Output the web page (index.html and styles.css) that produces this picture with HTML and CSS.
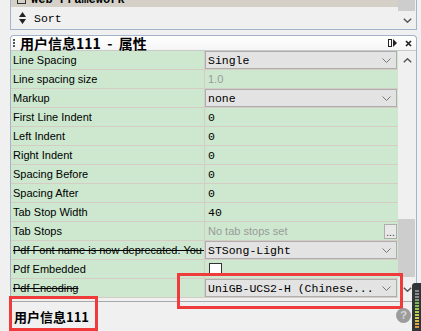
FILE: index.html
```html
<!DOCTYPE html>
<html lang="en">
<head>
    <meta charset="UTF-8">
    <meta name="viewport" content="width=device-width, initial-scale=1.0">
    <title>用户信息111 - 属性</title>
    <link rel="stylesheet" href="styles.css">
</head>
<body>
    <div class="top-panel">
        <div class="list">
            <div class="group-row"><span class="group-box"></span>Web Framework</div>
            <div class="sort-row">
                <svg class="sort-icon" width="7" height="12" viewBox="0 0 7 12"><path d="M3.5 0 L7 5 L0 5 Z M0 7 L7 7 L3.5 12 Z" fill="#222"/></svg>
                <span>Sort</span>
            </div>
        </div>
        <div class="vscroll top">
            <div class="sb-thumb small"></div>
            <div class="sb-btn"><svg width="9" height="5" viewBox="0 0 9 5"><polyline points="0.8,0.8 4.5,4.2 8.2,0.8" fill="none" stroke="#555" stroke-width="1.5"/></svg></div>
        </div>
    </div>

    <div class="prop-panel">
        <div class="panel-header">
            <svg class="grip" width="2" height="8" viewBox="0 0 2 8"><rect x="0" y="0" width="2" height="2" fill="#555"/><rect x="0" y="3" width="2" height="2" fill="#555"/><rect x="0" y="6" width="2" height="2" fill="#555"/></svg>
            <span class="panel-title">用户信息111 &nbsp;- &nbsp;属性</span>
            <span class="spacer"></span>
            <svg class="pin" width="9" height="8" viewBox="0 0 9 8"><rect x="0.5" y="0.5" width="3" height="7" fill="none" stroke="#222"/><path d="M5 0 L9 4 L5 8 Z" fill="#222"/></svg>
            <svg class="close" width="7" height="7" viewBox="0 0 7 7"><path d="M1 1 L6 6 M6 1 L1 6" stroke="#222" stroke-width="1.7"/></svg>
        </div>

        <div class="grid-area">
            <div class="rows">
                <div class="row"><div class="label">Line Spacing</div><div class="value"><div class="combo">Single<svg width="9" height="5" viewBox="0 0 9 5"><polyline points="0.5,0.5 4.5,4.5 8.5,0.5" fill="none" stroke="#777"/></svg></div></div></div>
                <div class="row"><div class="label">Line spacing size</div><div class="value muted">1.0</div></div>
                <div class="row"><div class="label">Markup</div><div class="value"><div class="combo">none<svg width="9" height="5" viewBox="0 0 9 5"><polyline points="0.5,0.5 4.5,4.5 8.5,0.5" fill="none" stroke="#777"/></svg></div></div></div>
                <div class="row"><div class="label">First Line Indent</div><div class="value num">0</div></div>
                <div class="row"><div class="label">Left Indent</div><div class="value num">0</div></div>
                <div class="row"><div class="label">Right Indent</div><div class="value num">0</div></div>
                <div class="row"><div class="label">Spacing Before</div><div class="value num">0</div></div>
                <div class="row"><div class="label">Spacing After</div><div class="value num">0</div></div>
                <div class="row"><div class="label">Tab Stop Width</div><div class="value num">40</div></div>
                <div class="row"><div class="label">Tab Stops</div><div class="value muted">No tab stops set<span class="spacer"></span><span class="dots-btn">...</span></div></div>
                <div class="row"><div class="label struck">Pdf Font name is now deprecated. You should use</div><div class="value"><div class="combo">STSong-Light<svg width="9" height="5" viewBox="0 0 9 5"><polyline points="0.5,0.5 4.5,4.5 8.5,0.5" fill="none" stroke="#777"/></svg></div></div></div>
                <div class="row"><div class="label">Pdf Embedded</div><div class="value"><span class="checkbox"></span></div></div>
                <div class="row"><div class="label struck">Pdf Encoding</div><div class="value"><div class="combo">UniGB-UCS2-H (Chinese...<svg width="9" height="5" viewBox="0 0 9 5"><polyline points="0.5,0.5 4.5,4.5 8.5,0.5" fill="none" stroke="#777"/></svg></div></div></div>
            </div>
            <div class="vscroll">
                <div class="sb-btn"><svg width="9" height="5" viewBox="0 0 9 5"><polyline points="0.8,4.2 4.5,0.8 8.2,4.2" fill="none" stroke="#555" stroke-width="1.5"/></svg></div>
                <div class="sb-track"><div class="sb-thumb"></div></div>
                <div class="sb-btn"><svg width="9" height="5" viewBox="0 0 9 5"><polyline points="0.8,0.8 4.5,4.2 8.2,0.8" fill="none" stroke="#555" stroke-width="1.5"/></svg></div>
            </div>
        </div>

        <div class="splitter"></div>
        <div class="description">用户信息111</div>
    </div>

    <!-- annotation boxes and floating bits over the window -->
    <div class="mark mark-desc"></div>
    <div class="mark mark-encoding"></div>
    <div class="help-bubble">?</div>
    <div class="meter"><div class="meter-bar"></div></div>
</body>
</html>
```

FILE: styles.css
```css
body {
    margin: 0;
    background-color: #f0f0f0;
    font-family: "Liberation Sans", Arial, sans-serif;
    font-size: 11px;
    color: #000;
    overflow: hidden;
    height: 331px;
}

/* top panel (solution list, scrolled to the end) */
.top-panel {
    display: flex;
    margin-left: 10px;
    width: 407px;
    height: 30px;
    box-sizing: border-box;
    border: 1px solid #a3b3ca;
    border-top: none;
}
.list {
    flex: 1;
    display: flex;
    flex-direction: column;
}
.group-row {
    height: 7px;
    overflow: hidden;
    background-color: #d4d0c8;
    display: flex;
    align-items: flex-end;
    padding-left: 6px;
    font-family: "Liberation Mono", monospace;
    font-weight: bold;
    font-size: 12px;
    line-height: 14px;
}
.group-row .group-box {
    width: 7px;
    height: 12px;
    border: 1px solid #333;
    margin-right: 5px;
    margin-bottom: 3px;
    flex-shrink: 0;
}
.group-row {
    padding-bottom: 0;
}
.sort-row {
    height: 22px;
    display: flex;
    align-items: center;
    padding-left: 8px;
    font-family: "Liberation Mono", monospace;
    font-size: 11.5px;
}
.sort-icon {
    margin-right: 8px;
}

/* scrollbars */
.vscroll {
    width: 18px;
    display: flex;
    flex-direction: column;
    background-color: #f0f0f0;
}
.vscroll.top {
    background-color: #f0f0f0;
}
.sb-btn {
    height: 18px;
    display: flex;
    align-items: center;
    justify-content: center;
    flex-shrink: 0;
}
.sb-track {
    flex: 1;
    display: flex;
    flex-direction: column;
    justify-content: flex-end;
    padding: 0 1px 3px 0;
}
.sb-thumb {
    height: 58px;
    background-color: #cdcdcd;
}
.sb-thumb.small {
    height: 11px;
    margin-right: 1px;
}

/* property panel */
.prop-panel {
    margin: 5px 0 0 10px;
    width: 407px;
    box-sizing: border-box;
    border: 1px solid #a3b3ca;
    border-bottom: none;
    border-radius: 4px 4px 0 0;
}
.panel-header {
    height: 15px;
    box-sizing: border-box;
    display: flex;
    align-items: center;
    padding: 0 4px 0 2px;
    background: linear-gradient(#ffffff, #f5f5f5);
    border-bottom: 1px solid #c9c9c9;
    border-radius: 4px 4px 0 0;
}
.grip {
    margin-right: 5px;
}
.panel-title {
    font-family: "Noto Sans CJK SC", sans-serif;
    font-weight: bold;
    font-size: 14px;
    line-height: 15px;
    white-space: nowrap;
}
.spacer {
    flex: 1;
}
.pin {
    margin-right: 8px;
}

.grid-area {
    display: flex;
    height: 247px;
}
.rows {
    width: 387px;
    background-color: #cde8cf;
}
.row {
    display: flex;
    height: 19px;
    box-sizing: border-box;
    border-bottom: 1px solid #d5cdc4;
}
.label {
    width: 194px;
    flex-shrink: 0;
    box-sizing: border-box;
    border-right: 1px solid #d5cdc4;
    padding-left: 2px;
    line-height: 18px;
    white-space: nowrap;
    overflow: hidden;
}
.label.struck {
    text-decoration: line-through;
}
.value {
    flex: 1;
    display: flex;
    align-items: center;
    padding-left: 3px;
    min-width: 0;
}
.value.num {
    font-family: "Liberation Mono", monospace;
    font-size: 11.5px;
}
.value.muted {
    color: #9a9a9a;
    padding-right: 1px;
}
.combo {
    display: flex;
    align-items: center;
    justify-content: space-between;
    height: 18px;
    box-sizing: border-box;
    margin-left: -3px;
    width: 192px;
    padding: 0 5px 0 2px;
    border: 1px solid #adadad;
    background-color: #e3e3e3;
    font-family: "Liberation Mono", monospace;
    font-size: 11.5px;
    white-space: nowrap;
}
.dots-btn {
    width: 13px;
    height: 15px;
    box-sizing: border-box;
    border: 1px solid #adadad;
    background-color: #e9e9e9;
    color: #333;
    font-size: 10px;
    line-height: 15px;
    text-align: center;
    margin-top: 1px;
}
.checkbox {
    width: 13px;
    height: 13px;
    box-sizing: border-box;
    border: 1px solid #333;
    background-color: #fff;
    margin-left: 1px;
    margin-top: 1px;
}

.splitter {
    height: 3px;
    border-bottom: 1px solid #a8a8a8;
}
.description {
    height: 40px;
    padding: 6px 3px;
    box-sizing: border-box;
    font-family: "Noto Sans CJK SC", sans-serif;
    font-weight: bold;
    font-size: 13px;
    line-height: 18px;
}

/* overlays */
.mark {
    position: absolute;
    border: 3px solid #ef3b3b;
    box-sizing: border-box;
}
.mark-desc {
    left: 9px;
    top: 296px;
    width: 89px;
    height: 35px;
}
.mark-encoding {
    left: 177px;
    top: 273px;
    width: 226px;
    height: 36px;
}
.help-bubble {
    position: absolute;
    left: 396px;
    top: 308px;
    width: 15px;
    height: 15px;
    border-radius: 50%;
    background-color: #9c9c9c;
    color: #d8d8d8;
    font-weight: bold;
    font-size: 11px;
    line-height: 15px;
    text-align: center;
}
.meter {
    position: absolute;
    left: 412px;
    top: 283px;
    width: 9px;
    height: 48px;
    background-color: #30353a;
    border-radius: 3px 0 0 0;
}
.meter-bar {
    margin: 6px 0 0 3px;
    width: 4px;
    height: 40px;
    background:
        repeating-linear-gradient(#30353a 0 1px, transparent 1px 3px),
        linear-gradient(#8a8a8a 0 20%, #7cc44a 40%, #d8d24a 70%, #e38a3a 100%);
}
```
